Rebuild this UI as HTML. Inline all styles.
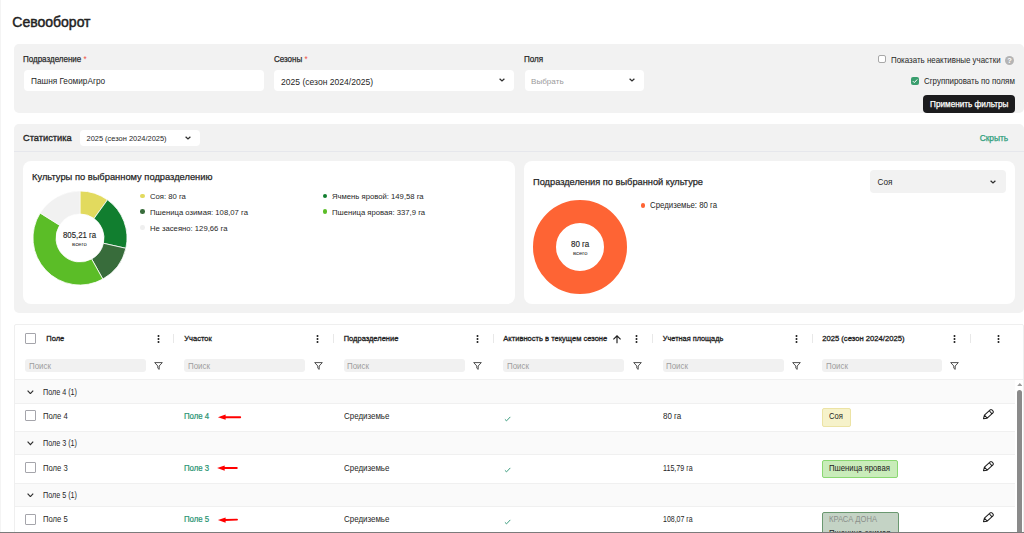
<!DOCTYPE html>
<html><head><meta charset="utf-8">
<style>
*{margin:0;padding:0;box-sizing:border-box}
html,body{width:1024px;height:533px;overflow:hidden;background:#fff}
body{font-family:"Liberation Sans",sans-serif;color:#262626;position:relative}
.a{position:absolute}
.t{position:absolute;white-space:nowrap;line-height:12px}
.sb{-webkit-text-stroke:0.25px currentColor}
.panel{position:absolute;background:#f2f2f2;border-radius:5px}
.inp{position:absolute;background:#fff;border-radius:4px}
.chev{position:absolute;width:6px;height:4px}
.card{position:absolute;background:#fff;border-radius:8px}
.cb{position:absolute;width:10.7px;height:10.7px;border:1px solid #a5a5ab;border-radius:1px;background:#fff}
.srch{position:absolute;background:#f1f1f1;border-radius:3px;height:13.3px;top:359px}
.srch span{position:absolute;left:3.6px;top:1px;line-height:13px;font-size:8.6px;color:#9d9d9d;transform:scaleX(0.92);transform-origin:0 50%}
.sep{position:absolute;width:1px;height:8.5px;background:#e8e8e8;top:334px}
.hd{position:absolute;top:333px;line-height:12px;font-size:7.5px;color:#1e1e1e;white-space:nowrap;-webkit-text-stroke:0.3px currentColor}
.keb{position:absolute;top:334.7px;width:3px;height:8px;fill:#1a1a1a}
.flt{position:absolute;top:361.5px;width:9px;height:8px}
.grp{position:absolute;left:15px;width:1000px;background:#fafafa}
.line{position:absolute;left:15px;width:1000px;height:1px;background:#f0f0f0}
.cell{position:absolute;font-size:8.3px;line-height:12px;white-space:nowrap;color:#262626;transform-origin:0 50%}
.link{color:#25926f;-webkit-text-stroke:0.2px currentColor}
.dot{position:absolute;width:4.6px;height:4.6px;border-radius:50%}
.leg{position:absolute;font-size:8.1px;line-height:12px;white-space:nowrap;transform:scaleX(0.95);transform-origin:0 50%}
</style></head><body>
<div class="a" style="left:0;top:0;width:1px;height:533px;background:#f4f4f4"></div>

<!-- title -->
<div class="t" style="left:12.3px;top:15px;font-size:14px;line-height:15px;color:#222;-webkit-text-stroke:0.45px #222">Севооборот</div>

<!-- filter panel -->
<div class="panel" style="left:14px;top:44px;width:1010px;height:69px"></div>
<div class="t sb" style="left:23.3px;top:53px;font-size:8.7px;color:#2a2a2a;transform:scaleX(0.92);transform-origin:0 50%">Подразделение <span style="color:#f0544a;-webkit-text-stroke:0">*</span></div>
<div class="inp" style="left:24px;top:70px;width:239.5px;height:21px"></div>
<div class="t" style="left:31px;top:75.6px;font-size:8.25px">Пашня ГеомирАгро</div>

<div class="t sb" style="left:273.6px;top:53px;font-size:8.7px;color:#2a2a2a;transform:scaleX(0.92);transform-origin:0 50%">Сезоны <span style="color:#f0544a;-webkit-text-stroke:0">*</span></div>
<div class="inp" style="left:274px;top:70px;width:240px;height:21px"></div>
<div class="t" style="left:281px;top:75.6px;font-size:8.55px">2025 (сезон 2024/2025)</div>
<svg class="chev" style="left:499px;top:78.2px" viewBox="0 0 6 4"><path d="M0.6 0.7L3 3L5.4 0.7" fill="none" stroke="#2e2e2e" stroke-width="1.25"/></svg>

<div class="t sb" style="left:524px;top:53px;font-size:8.7px;color:#2a2a2a;transform:scaleX(0.93);transform-origin:0 50%">Поля</div>
<div class="inp" style="left:524.5px;top:70px;width:119.5px;height:21px"></div>
<div class="t" style="left:531px;top:75.6px;font-size:8.1px;color:#9b9b9b">Выбрать</div>
<svg class="chev" style="left:629px;top:78.2px" viewBox="0 0 6 4"><path d="M0.6 0.7L3 3L5.4 0.7" fill="none" stroke="#2e2e2e" stroke-width="1.25"/></svg>

<div class="a" style="left:878.3px;top:55.3px;width:8px;height:8px;border:1px solid #a8a8a8;border-radius:2px;background:#fff"></div>
<div class="t" style="left:891.4px;top:54.3px;font-size:8.35px;transform:scaleX(0.95);transform-origin:0 50%">Показать неактивные участки</div>
<div class="a" style="left:1005px;top:55.5px;width:9px;height:9px;border-radius:50%;background:#b4b4b4;color:#fff;font-size:7.5px;line-height:9.5px;text-align:center;font-weight:bold">?</div>

<div class="a" style="left:911.4px;top:76.8px;width:8px;height:8px;border-radius:2px;background:#3a9e6e"></div>
<svg class="a" style="left:911.4px;top:76.8px;width:8px;height:8px" viewBox="0 0 8 8"><path d="M1.8 4.1L3.3 5.6L6.3 2.4" fill="none" stroke="#fff" stroke-width="1"/></svg>
<div class="t" style="left:923.7px;top:75px;font-size:8.35px;transform:scaleX(0.95);transform-origin:0 50%">Сгруппировать по полям</div>

<div class="a" style="left:923px;top:95px;width:92px;height:17.8px;background:#1c1c1e;border-radius:4px"></div>
<div class="t sb" style="left:930px;top:99px;font-size:8.2px;color:#fff">Применить фильтры</div>

<!-- stats panel -->
<div class="panel" style="left:14px;top:124.3px;width:1010px;height:188.5px"></div>
<div class="t" style="left:23.2px;top:132.3px;font-size:9.6px;transform:scaleX(0.965);transform-origin:0 50%;-webkit-text-stroke:0.35px currentColor">Статистика</div>
<div class="inp" style="left:79.5px;top:130px;width:120.5px;height:15.8px"></div>
<div class="t" style="left:86.5px;top:132.8px;font-size:7.45px">2025 (сезон 2024/2025)</div>
<svg class="chev" style="left:184.6px;top:135.8px" viewBox="0 0 6 4"><path d="M0.6 0.7L3 3L5.4 0.7" fill="none" stroke="#2e2e2e" stroke-width="1.25"/></svg>
<div class="t sb" style="left:979.7px;top:132.3px;font-size:8.35px;color:#2f9e7c">Скрыть</div>
<div class="a" style="left:14px;top:151px;width:1010px;height:1px;background:#e6e7ec"></div>

<div class="card" style="left:23px;top:161px;width:492px;height:143px"></div>
<div class="t sb" style="left:32.4px;top:171px;font-size:9.8px;transform:scaleX(0.952);transform-origin:0 50%">Культуры по выбранному подразделению</div>
<svg class="a" style="left:32.6px;top:190.9px;width:94px;height:94px" viewBox="0 0 94 94">
<path d="M47.00 0.00A47 47 0 0 1 74.47 8.86L61.03 27.53A24 24 0 0 0 47.00 23.00Z" fill="#e2da5e" stroke="#fff" stroke-width="0.8"/>
<path d="M74.47 8.86A47 47 0 0 1 92.86 57.29L70.42 52.25A24 24 0 0 0 61.03 27.53Z" fill="#117e2f" stroke="#fff" stroke-width="0.8"/>
<path d="M92.86 57.29A47 47 0 0 1 69.82 88.09L58.65 67.98A24 24 0 0 0 70.42 52.25Z" fill="#386c3b" stroke="#fff" stroke-width="0.8"/>
<path d="M69.82 88.09A47 47 0 0 1 7.16 22.07L26.65 34.27A24 24 0 0 0 58.65 67.98Z" fill="#5bbd27" stroke="#fff" stroke-width="0.8"/>
<path d="M7.16 22.07A47 47 0 0 1 47.00 0.00L47.00 23.00A24 24 0 0 0 26.65 34.27Z" fill="#f1f1f1" stroke="#fff" stroke-width="0.5"/>
</svg>
<div class="t" style="left:62.9px;top:229px;font-size:8.9px;transform:scaleX(0.88);transform-origin:0 50%;-webkit-text-stroke:0.15px currentColor">805,21 га</div>
<div class="t" style="left:72.1px;top:240.6px;font-size:5.9px;line-height:7px">всего</div>

<div class="dot" style="left:140px;top:193.9px;background:#e2da5e"></div>
<div class="leg" style="left:149.8px;top:191px">Соя: 80 га</div>
<div class="dot" style="left:140px;top:209.4px;background:#386c3b"></div>
<div class="leg" style="left:149.8px;top:207px">Пшеница озимая: 108,07 га</div>
<div class="dot" style="left:140px;top:225.4px;background:#efefef"></div>
<div class="leg" style="left:149.8px;top:223px">Не засеяно: 129,66 га</div>
<div class="dot" style="left:322.6px;top:193.9px;background:#117e2f"></div>
<div class="leg" style="left:331.9px;top:191px">Ячмень яровой: 149,58 га</div>
<div class="dot" style="left:322.6px;top:209.4px;background:#5bbd27"></div>
<div class="leg" style="left:331.9px;top:207px">Пшеница яровая: 337,9 га</div>

<div class="card" style="left:524px;top:161px;width:491px;height:143px"></div>
<div class="t sb" style="left:532.7px;top:176px;font-size:9.8px;transform:scaleX(0.944);transform-origin:0 50%">Подразделения по выбранной культуре</div>
<div class="a" style="left:870px;top:170.2px;width:135.7px;height:22.4px;background:#f2f2f2;border-radius:4px"></div>
<div class="t" style="left:877.6px;top:177px;font-size:8.2px">Соя</div>
<svg class="chev" style="left:989.6px;top:179.7px" viewBox="0 0 6 4"><path d="M0.6 0.7L3 3L5.4 0.7" fill="none" stroke="#2e2e2e" stroke-width="1.25"/></svg>
<svg class="a" style="left:533.1px;top:199.8px;width:94px;height:94px" viewBox="0 0 94 94"><circle cx="47" cy="47" r="35.5" fill="none" stroke="#fe6434" stroke-width="23"/></svg>
<div class="t" style="left:570.8px;top:238px;font-size:8.9px;transform:scaleX(0.9);transform-origin:0 50%;-webkit-text-stroke:0.15px currentColor">80 га</div>
<div class="t" style="left:572.9px;top:249.8px;font-size:5.9px;line-height:7px">всего</div>
<div class="dot" style="left:640.6px;top:203px;background:#fe6434"></div>
<div class="leg" style="left:650.2px;top:199.9px;font-size:8.25px">Средиземье: 80 га</div>

<!-- table -->
<div class="a" style="left:14px;top:324px;width:1010px;height:215px;border:1px solid #efefef;border-radius:2px"></div>
<div class="line" style="top:379px;width:1008px"></div>

<div class="cb" style="left:25px;top:333.2px"></div>
<div class="hd" style="left:46.3px">Поле</div>
<svg class="keb" viewBox="0 0 3 8" style="left:157.15px"><circle cx="1.5" cy="1.1" r="1"/><circle cx="1.5" cy="4" r="1"/><circle cx="1.5" cy="6.9" r="1"/></svg>
<div class="sep" style="left:173px"></div>
<div class="hd" style="left:184.3px">Участок</div>
<svg class="keb" viewBox="0 0 3 8" style="left:316.3px"><circle cx="1.5" cy="1.1" r="1"/><circle cx="1.5" cy="4" r="1"/><circle cx="1.5" cy="6.9" r="1"/></svg>
<div class="sep" style="left:333px"></div>
<div class="hd" style="left:343.7px">Подразделение</div>
<svg class="keb" viewBox="0 0 3 8" style="left:475.8px"><circle cx="1.5" cy="1.1" r="1"/><circle cx="1.5" cy="4" r="1"/><circle cx="1.5" cy="6.9" r="1"/></svg>
<div class="sep" style="left:493px"></div>
<div class="hd" style="left:503.3px;font-size:7.55px">Активность в текущем сезоне</div>
<svg class="a" style="left:612.5px;top:334.5px;width:8px;height:9px" viewBox="0 0 8 9"><path d="M4 8.2V0.8M0.4 4.4L4 0.8L7.6 4.4" fill="none" stroke="#1e1e1e" stroke-width="1.15"/></svg>
<svg class="keb" viewBox="0 0 3 8" style="left:635px"><circle cx="1.5" cy="1.1" r="1"/><circle cx="1.5" cy="4" r="1"/><circle cx="1.5" cy="6.9" r="1"/></svg>
<div class="sep" style="left:652px"></div>
<div class="hd" style="left:662.8px;font-size:7.35px">Учетная площадь</div>
<svg class="keb" viewBox="0 0 3 8" style="left:794.5px"><circle cx="1.5" cy="1.1" r="1"/><circle cx="1.5" cy="4" r="1"/><circle cx="1.5" cy="6.9" r="1"/></svg>
<div class="sep" style="left:811.5px"></div>
<div class="hd" style="left:822.2px;font-size:7.65px">2025 (сезон 2024/2025)</div>
<svg class="keb" viewBox="0 0 3 8" style="left:952.5px"><circle cx="1.5" cy="1.1" r="1"/><circle cx="1.5" cy="4" r="1"/><circle cx="1.5" cy="6.9" r="1"/></svg>
<div class="sep" style="left:970px"></div>
<svg class="keb" viewBox="0 0 3 8" style="left:997.2px"><circle cx="1.5" cy="1.1" r="1"/><circle cx="1.5" cy="4" r="1"/><circle cx="1.5" cy="6.9" r="1"/></svg>

<div class="srch" style="left:25px;width:120.5px"><span>Поиск</span></div>
<div class="srch" style="left:184px;width:121px"><span>Поиск</span></div>
<div class="srch" style="left:343.7px;width:121px"><span>Поиск</span></div>
<div class="srch" style="left:503px;width:121px"><span>Поиск</span></div>
<div class="srch" style="left:662.7px;width:121px"><span>Поиск</span></div>
<div class="srch" style="left:822px;width:119.5px"><span>Поиск</span></div>
<svg class="flt" style="left:154.3px" viewBox="0 0 9 8"><path d="M0.7 0.6H8.3L5.2 4V7.4L3.8 6.2V4Z" fill="none" stroke="#333" stroke-width="0.85" stroke-linejoin="round"/></svg>
<svg class="flt" style="left:313.8px" viewBox="0 0 9 8"><path d="M0.7 0.6H8.3L5.2 4V7.4L3.8 6.2V4Z" fill="none" stroke="#333" stroke-width="0.85" stroke-linejoin="round"/></svg>
<svg class="flt" style="left:473.3px" viewBox="0 0 9 8"><path d="M0.7 0.6H8.3L5.2 4V7.4L3.8 6.2V4Z" fill="none" stroke="#333" stroke-width="0.85" stroke-linejoin="round"/></svg>
<svg class="flt" style="left:632.5px" viewBox="0 0 9 8"><path d="M0.7 0.6H8.3L5.2 4V7.4L3.8 6.2V4Z" fill="none" stroke="#333" stroke-width="0.85" stroke-linejoin="round"/></svg>
<svg class="flt" style="left:791.5px" viewBox="0 0 9 8"><path d="M0.7 0.6H8.3L5.2 4V7.4L3.8 6.2V4Z" fill="none" stroke="#333" stroke-width="0.85" stroke-linejoin="round"/></svg>
<svg class="flt" style="left:949.8px" viewBox="0 0 9 8"><path d="M0.7 0.6H8.3L5.2 4V7.4L3.8 6.2V4Z" fill="none" stroke="#333" stroke-width="0.85" stroke-linejoin="round"/></svg>

<!-- rows -->
<div class="grp" style="top:380px;height:23.5px"></div>
<div class="line" style="top:403.4px"></div>
<div class="line" style="top:431.4px"></div>
<div class="grp" style="top:432px;height:22px"></div>
<div class="line" style="top:454px"></div>
<div class="line" style="top:482.7px"></div>
<div class="grp" style="top:483.7px;height:22.3px"></div>
<div class="line" style="top:506px"></div>
<svg class="a" style="left:27px;top:389.5px;width:7px;height:4.5px" viewBox="0 0 7 4.5"><path d="M0.6 0.6L3.4 3.6L6.2 0.6" fill="none" stroke="#2e2e2e" stroke-width="1.15"/></svg>
<div class="cell" style="left:43px;top:386px;transform:scaleX(0.867);">Поле 4 (1)</div>
<div class="cb" style="left:25px;top:410.3px"></div>
<div class="cell" style="left:43px;top:410px;transform:scaleX(0.922);">Поле 4</div>
<div class="cell link" style="left:184.2px;top:410px;transform:scaleX(0.94);">Поле 4</div>
<div class="cell" style="left:343.8px;top:410px;transform:scaleX(0.956);">Средиземье</div>
<div class="cell" style="left:662.6px;top:410px;transform:scaleX(0.963);">80 га</div>

<svg class="a" style="left:27px;top:441px;width:7px;height:4.5px" viewBox="0 0 7 4.5"><path d="M0.6 0.6L3.4 3.6L6.2 0.6" fill="none" stroke="#2e2e2e" stroke-width="1.15"/></svg>
<div class="cell" style="left:43px;top:437px;transform:scaleX(0.867);">Поле 3 (1)</div>
<div class="cb" style="left:25px;top:462px"></div>
<div class="cell" style="left:43px;top:462px;transform:scaleX(0.922);">Поле 3</div>
<div class="cell link" style="left:184.2px;top:462px;transform:scaleX(0.94);">Поле 3</div>
<div class="cell" style="left:343.8px;top:462px;transform:scaleX(0.956);">Средиземье</div>
<div class="cell" style="left:662.6px;top:462px;transform:scaleX(0.857);">115,79 га</div>

<svg class="a" style="left:27px;top:492.5px;width:7px;height:4.5px" viewBox="0 0 7 4.5"><path d="M0.6 0.6L3.4 3.6L6.2 0.6" fill="none" stroke="#2e2e2e" stroke-width="1.15"/></svg>
<div class="cell" style="left:43px;top:489px;transform:scaleX(0.867);">Поле 5 (1)</div>
<div class="cb" style="left:25px;top:514px"></div>
<div class="cell" style="left:43px;top:513px;transform:scaleX(0.922);">Поле 5</div>
<div class="cell link" style="left:184.2px;top:513px;transform:scaleX(0.94);">Поле 5</div>
<div class="cell" style="left:343.8px;top:513px;transform:scaleX(0.956);">Средиземье</div>
<div class="cell" style="left:662.6px;top:513px;transform:scaleX(0.842);">108,07 га</div>

<!-- checkmarks -->
<svg class="a" style="left:504px;top:415.5px;width:7.5px;height:6px" viewBox="0 0 7.5 6"><path d="M0.9 3.3L2.5 4.9L6.3 0.9" fill="none" stroke="#3a9c7e" stroke-width="1"/></svg>
<svg class="a" style="left:504px;top:467px;width:7.5px;height:6px" viewBox="0 0 7.5 6"><path d="M0.9 3.3L2.5 4.9L6.3 0.9" fill="none" stroke="#3a9c7e" stroke-width="1"/></svg>
<svg class="a" style="left:504px;top:519px;width:7.5px;height:6px" viewBox="0 0 7.5 6"><path d="M0.9 3.3L2.5 4.9L6.3 0.9" fill="none" stroke="#3a9c7e" stroke-width="1"/></svg>

<!-- red arrows -->
<svg class="a" style="left:210px;top:400px;width:40px;height:133px" viewBox="0 0 40 133">
<path d="M7.9 17.15L15.6 14.5V19.8Z" fill="#f00"/><path d="M15 17.2H30.2" stroke="#f00" stroke-width="1.9" stroke-linecap="round"/>
<path d="M7.1 68.05L14.7 65.4V70.7Z" fill="#f00"/><path d="M14 68.05H26.8" stroke="#f00" stroke-width="1.9" stroke-linecap="round"/>
<path d="M7.9 120.1L15.6 117.4V122.8Z" fill="#f00"/><path d="M15 120L27 119.6" stroke="#f00" stroke-width="1.9" stroke-linecap="round"/>
</svg>

<!-- chips -->
<div class="a" style="left:822px;top:408.1px;width:29px;height:18.6px;background:#f6f2ca;border:1px solid #ece3a4;border-radius:2px"></div>
<div class="cell" style="left:829.3px;top:410px;transform:scaleX(0.92);color:#222">Соя</div>
<div class="a" style="left:822px;top:460.3px;width:76px;height:18px;background:#c9ecba;border:1px solid #8ad872;border-radius:2px"></div>
<div class="cell" style="left:829.4px;top:462px;transform:scaleX(0.933);color:#222">Пшеница яровая</div>
<div class="a" style="left:822px;top:512px;width:77px;height:25px;background:#c4d3c5;border:1px solid #6a9870;border-radius:2px;overflow:hidden"></div>
<div class="cell" style="left:829.4px;top:513px;transform:scaleX(0.915);color:#8a8f8a">КРАСА ДОНА</div>
<div class="cell" style="left:829.4px;top:526.5px;transform:scaleX(0.933);color:#222">Пшеница озимая</div>

<!-- pencils -->
<svg class="a" style="left:980px;top:406px;width:14px;height:14px" viewBox="0 0 14 14"><path d="M3.50 12.70 L4.43 9.10 L10.45 3.68 L11.86 3.76 L13.27 5.32 L13.19 6.73 L7.18 12.15Z M4.43 9.10L7.18 12.15 M9.26 4.75L12.01 7.80" fill="none" stroke="#1e1e1e" stroke-width="1.05" stroke-linejoin="round"/></svg>
<svg class="a" style="left:980px;top:457.5px;width:14px;height:14px" viewBox="0 0 14 14"><path d="M3.50 12.70 L4.43 9.10 L10.45 3.68 L11.86 3.76 L13.27 5.32 L13.19 6.73 L7.18 12.15Z M4.43 9.10L7.18 12.15 M9.26 4.75L12.01 7.80" fill="none" stroke="#1e1e1e" stroke-width="1.05" stroke-linejoin="round"/></svg>
<svg class="a" style="left:980px;top:509px;width:14px;height:14px" viewBox="0 0 14 14"><path d="M3.50 12.70 L4.43 9.10 L10.45 3.68 L11.86 3.76 L13.27 5.32 L13.19 6.73 L7.18 12.15Z M4.43 9.10L7.18 12.15 M9.26 4.75L12.01 7.80" fill="none" stroke="#1e1e1e" stroke-width="1.05" stroke-linejoin="round"/></svg>

<!-- scrollbar -->
<svg class="a" style="left:1016.5px;top:382.8px;width:5.6px;height:3.2px" viewBox="0 0 5.6 3.2"><path d="M0 3.2L2.8 0L5.6 3.2Z" fill="#9a9a9a"/></svg>
<div class="a" style="left:1017px;top:390px;width:5px;height:145px;background:#8a8a8a;border-radius:2.5px"></div>
<div class="a" style="left:0;top:532px;width:1024px;height:1px;background:#7b7b7b"></div>
</body></html>
